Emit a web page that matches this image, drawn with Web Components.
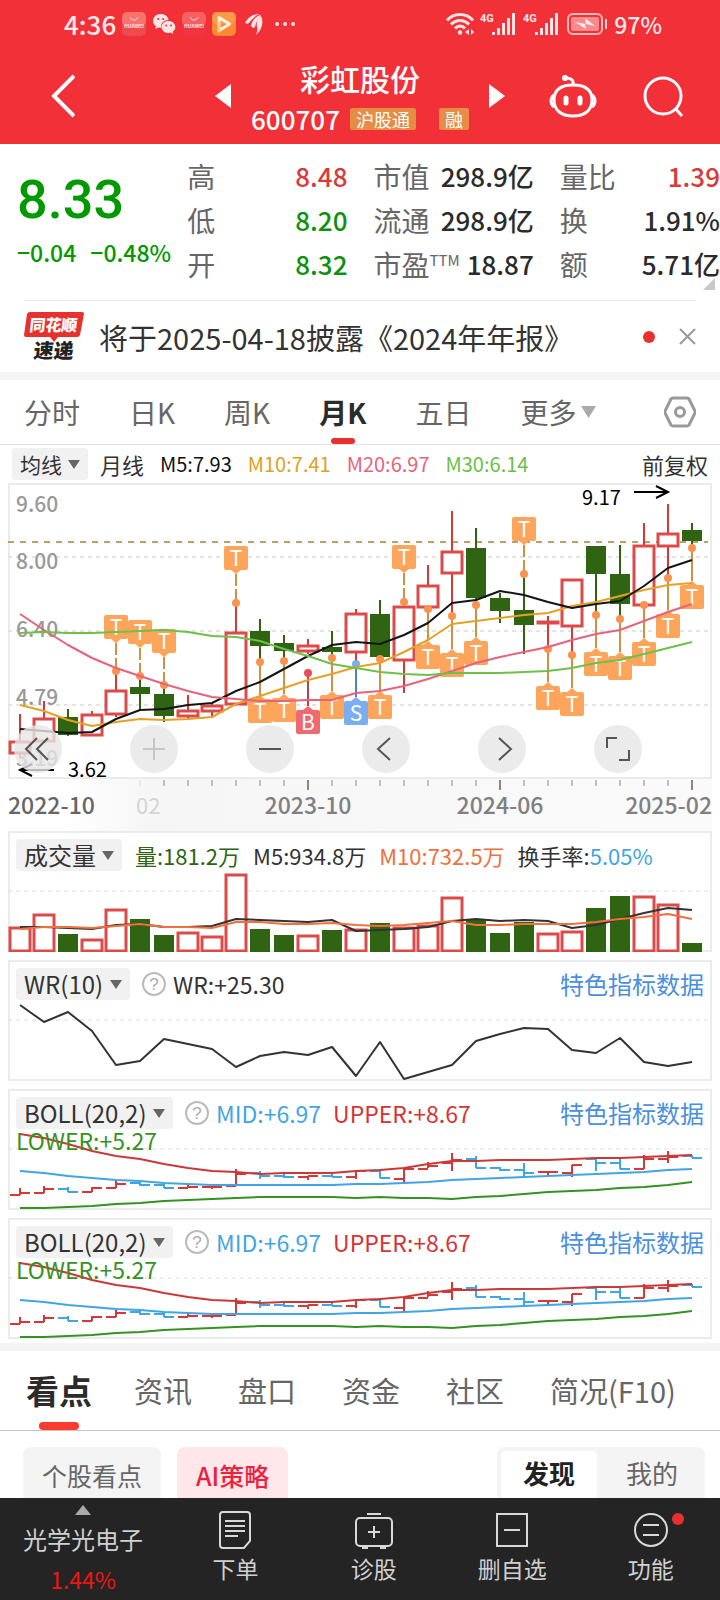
<!DOCTYPE html>
<html lang="zh-CN">
<head>
<meta charset="utf-8">
<meta name="viewport" content="width=device-width, initial-scale=1">
<title>彩虹股份 600707</title>
<style>
  body {
    margin: 0;
    background: #fff;
    color: #333;
    font-family: "Noto Sans CJK SC", "Noto Sans", sans-serif;
  }
</style>
</head>
<body>
<stock-app>
  <status-bar slot="top"></status-bar>
  <stock-header slot="top" name="彩虹股份" code="600707">
    <span>沪股通</span>
    <span>融</span>
  </stock-header>

  <stock-quote></stock-quote>
  <news-banner>将于2025-04-18披露《2024年年报》</news-banner>
  <period-tabs></period-tabs>
  <average-legend></average-legend>
  <kline-chart></kline-chart>

  <indicator-panel name="成交量" chart="volume">
    <legend-value color="#2f6412">量:181.2万</legend-value>
    <legend-value>M5:934.8万</legend-value>
    <legend-value color="#f0713c">M10:732.5万</legend-value>
    <legend-value>换手率:<span style="color:#42a5e3">5.05%</span></legend-value>
  </indicator-panel>
  <indicator-panel name="WR(10)" chart="wr" help>
    <legend-value>WR:+25.30</legend-value>
  </indicator-panel>
  <indicator-panel name="BOLL(20,2)" chart="boll" help>
    <legend-value color="#42a5e3">MID:+6.97</legend-value>
    <legend-value color="#d63333">UPPER:+8.67</legend-value>
    <legend-value slot="second" color="#359223">LOWER:+5.27</legend-value>
  </indicator-panel>
  <indicator-panel name="BOLL(20,2)" chart="boll" help>
    <legend-value color="#42a5e3">MID:+6.97</legend-value>
    <legend-value color="#d63333">UPPER:+8.67</legend-value>
    <legend-value slot="second" color="#359223">LOWER:+5.27</legend-value>
  </indicator-panel>

  <section-tabs></section-tabs>
  <view-filter></view-filter>

  <bottom-nav slot="bottom"></bottom-nav>
</stock-app>

<script>
// ---- shared chart helpers ----

const RED = "#d63838";
const GREEN = "#2f6412";

// x of the nth month inside a 704 wide chart
const monthX = (i) => 12 + i * 24;

const polyline = (values, color, width = 2) =>
  `<polyline fill="none" stroke="${color}" stroke-width="${width}" stroke-linejoin="round"
    points="${values.map((y, i) => `${monthX(i)},${y}`).join(" ")}"/>`;

const dashLine = (y, color = "#ddd", dash = "4 4", width = 1) =>
  `<line x1="0" x2="700" y1="${y}" y2="${y}" stroke="${color}" stroke-width="${width}" stroke-dasharray="${dash}"/>`;

const bar = (i, top, bottom, up) => {
  const x = monthX(i);
  return up
    ? `<rect x="${x - 10}" y="${top}" width="20" height="${Math.max(bottom - top, 1)}" fill="#fff" stroke="#dc4a4a" stroke-width="3"/>`
    : `<rect x="${x - 10}" y="${top}" width="20" height="${bottom - top}" fill="${GREEN}"/>`;
};

// ---- page shell ----

class StockApp extends HTMLElement {
  constructor() {
    super();
    this.attachShadow({ mode: "open" });
    this.shadowRoot.innerHTML = `
      <style>
        :host {
          display: flex;
          flex-direction: column;
          height: 100vh;
        }
        header, footer { flex: none; }
        main {
          flex: 1;
          min-height: 0;
          overflow: hidden;
        }
      </style>
      <header><slot name="top"></slot></header>
      <main><slot></slot></main>
      <footer><slot name="bottom"></slot></footer>
    `;
  }
}

class StatusBar extends HTMLElement {
  constructor() {
    super();
    this.attachShadow({ mode: "open" });
    this.shadowRoot.innerHTML = `
      <style>
        :host {
          display: flex;
          align-items: center;
          justify-content: space-between;
          height: 48px;
          padding: 0 58px 0 64px;
          background: #f23038;
          color: #ffe9e9;
          font-size: 26px;
          font-weight: 500;
          line-height: 32px;
        }
        div {
          display: flex;
          align-items: center;
          gap: 6px;
        }
        .percent { font-size: 23px; }
        svg { display: block; }
      </style>
      <div>
        <span>4:36</span>
        ${this.appStore("#f8736b", "#ef4b4e")}
        <svg width="24" height="24" viewBox="0 0 24 24">
          <path fill="#ffe4e4" d="M9 2C4 2 1 5.300 1 9c0 2.200 1.200 4 3 5.300L3.300 17l3-1.600c1 .3 1.900.4 2.800.4C8.600 11 12 8 16.600 8 16 4.500 13 2 9 2z"/>
          <path fill="#ffe4e4" d="M16.500 9c-4 0-7 2.700-7 6s3 6 7 6c.8 0 1.600-.1 2.300-.4L21.300 22l-.6-2.200c1.600-1.200 2.600-2.900 2.600-4.800 0-3.300-3-6-6.800-6z"/>
          <g fill="#f23038"><circle cx="6.200" cy="7" r="1.100"/><circle cx="11.200" cy="7" r="1.100"/><circle cx="14.200" cy="13.500" r="1"/><circle cx="19" cy="13.500" r="1"/></g>
        </svg>
        ${this.appStore("#f7605f", "#f03540")}
        <svg width="24" height="24" viewBox="0 0 24 24">
          <rect width="24" height="24" rx="5" fill="#fb8a33"/>
          <rect width="24" height="12" rx="5" fill="#fc9a48"/>
          <path d="M7 5.500 17.500 12 7 18.500z" fill="none" stroke="#fff3e4" stroke-width="3" stroke-linejoin="round"/>
          <path d="M7 11v8" stroke="#ffc890" stroke-width="3" stroke-linecap="round"/>
        </svg>
        <svg width="24" height="24" viewBox="0 0 24 24" fill="#ffe4e4">
          <path d="M3 11C6 5 11 2 18 2c-4 1-8 5-11 9-1 1-3 1-4 0z"/>
          <path d="M9 14c1-6 5-10 10-11-3 4-5 7-6 12-1 1-3 1-4-1z"/>
          <path d="M15 15c-1-5 1-9 4-11 3 6 1 14-5 19 1-3 2-5 1-8z"/>
        </svg>
        <svg width="24" height="6" viewBox="0 0 24 6" fill="#ffe4e4">
          <circle cx="5" cy="3" r="2"/><circle cx="13" cy="3" r="2"/><circle cx="21" cy="3" r="2"/>
        </svg>
      </div>
      <div>
        <svg width="28" height="24" viewBox="0 0 28 24" fill="none" stroke="#ffe4e4" stroke-width="3">
          <path d="M1 8.500C8 .5 20 .5 27 8.500M5 12.500c5-5.500 13-5.500 18 0M9 16.500c3-3.200 7-3.200 10 0"/>
          <circle cx="14" cy="20.500" r="2.200" fill="#ffe4e4" stroke="none"/>
          <path d="M23 17v6l-4-3zM25 23v-6l3 3z" fill="#ffe4e4" stroke="none"/>
        </svg>
        ${this.signal()}
        ${this.signal()}
        <svg width="42" height="24" viewBox="0 0 42 24">
          <rect x="2" y="2" width="34" height="20" rx="5" fill="none" stroke="#ffb9bb" stroke-width="2"/>
          <rect x="5" y="5" width="28" height="14" rx="2" fill="#fa8a8e"/>
          <path d="m9 10 11 2-1-6 10 8-10-2 1 5z" fill="#ffecec"/>
          <path d="M40 7v10" stroke="#ffd0d0" stroke-width="2"/>
        </svg>
        <span class="percent">97%</span>
      </div>
    `;
  }

  appStore(top, bottom) {
    return `
      <svg width="24" height="24" viewBox="0 0 24 24">
        <rect width="24" height="24" rx="5" fill="${bottom}"/>
        <rect width="24" height="14" rx="5" fill="${top}"/>
        <path d="M8 5c1 4 7 4 8 0" fill="none" stroke="#ffe4e4"/>
        <text x="12" y="16" text-anchor="middle" font-size="5" font-weight="700" fill="#ffe4e4">HUAWEI</text>
      </svg>`;
  }

  signal() {
    return `
      <svg width="37" height="24" viewBox="0 0 37 24" fill="#ffe4e4">
        <text x="0" y="10" font-size="11" font-weight="700" font-family="Roboto, sans-serif">4G</text>
        <path d="M12 20h3v3h-3zM17 16h3v7h-3zM22 11h3v12h-3zM27 6h3v17h-3zM32 1h3v22h-3z"/>
      </svg>`;
  }
}

class StockHeader extends HTMLElement {
  constructor() {
    super();
    this.attachShadow({ mode: "open" });
  }

  connectedCallback() {
    this.shadowRoot.innerHTML = `
      <style>
        :host {
          display: grid;
          grid-template-columns: 1fr auto 1fr;
          align-items: center;
          height: 96px;
          padding: 0 36px;
          background: #f23038;
          color: #fff;
        }
        button {
          display: block;
          padding: 0;
          border: 0;
          background: none;
          color: inherit;
          cursor: pointer;
        }
        svg { display: block; }
        .back { margin-left: 15px; }
        .switcher {
          display: flex;
          align-items: center;
          gap: 20px;
        }
        h1 {
          margin: 0 0 12px;
          font-size: 30px;
          font-weight: 500;
          line-height: 36px;
          text-align: center;
        }
        .code {
          display: flex;
          align-items: center;
          gap: 10px;
          margin-bottom: 2px;
          font-size: 26px;
          font-weight: 500;
          line-height: 22px;
        }
        .badges {
          display: flex;
          gap: 23px;
        }
        ::slotted(span) {
          padding: 0 6px;
          border-radius: 2px;
          background: #e58c46;
          font-size: 18px;
          font-weight: 400;
          line-height: 22px;
        }
        .actions {
          display: flex;
          align-items: center;
          justify-content: flex-end;
          gap: 46px;
        }
      </style>
      <button class="back" aria-label="返回">
        <svg width="24" height="44" viewBox="0 0 24 44" fill="none" stroke="#fff" stroke-width="4"><path d="M23 2 3 22l20 20"/></svg>
      </button>
      <div class="switcher">
        <button aria-label="上一只"><svg width="16" height="24" viewBox="0 0 16 24"><path d="M16 0v24L0 12z" fill="#fff"/></svg></button>
        <div>
          <h1>${this.getAttribute("name")}</h1>
          <div class="code">${this.getAttribute("code")}<div class="badges"><slot></slot></div></div>
        </div>
        <button aria-label="下一只"><svg width="16" height="24" viewBox="0 0 16 24"><path d="M0 0v24l16-12z" fill="#fff"/></svg></button>
      </div>
      <div class="actions">
        <button aria-label="智能助手">
          <svg width="48" height="44" viewBox="0 0 48 44" fill="none" stroke="#fff" stroke-width="3">
            <path d="M24 11c12 0 19 5 19 15s-7 16-19 16S5 36 5 26s7-15 19-15z"/>
            <path d="M5 21c-4 3-4 9 0 12M43 21c4 3 4 9 0 12M24 11c1-5-2-7-7-7"/>
            <circle cx="16" cy="4" r="3" fill="#fff" stroke="none"/>
            <path d="M17 24v5M31 24v5" stroke-width="5" stroke-linecap="round"/>
          </svg>
        </button>
        <button aria-label="搜索">
          <svg width="41" height="41" viewBox="0 0 41 41" fill="none" stroke="#fff" stroke-width="3">
            <circle cx="20" cy="20" r="18"/><path d="m32 32 7 8"/>
          </svg>
        </button>
      </div>
    `;
  }
}

class StockQuote extends HTMLElement {
  constructor() {
    super();
    this.attachShadow({ mode: "open" });
    this.stats = [
      ["高", "8.48", "up"], ["市值", "298.9亿"], ["量比", "1.39", "up"],
      ["低", "8.20", "down"], ["流通", "298.9亿"], ["换", "1.91%"],
      ["开", "8.32", "down"], ["市盈<sup>TTM</sup>", "18.87"], ["额", "5.71亿"],
    ];
    this.shadowRoot.innerHTML = `
      <style>
        :host {
          position: relative;
          display: flex;
          gap: 16px;
          padding: 10px 0 14px 17px;
        }
        .price { color: #009900; }
        .last {
          margin-top: 10px;
          font-family: Roboto, sans-serif;
          font-size: 54px;
          font-weight: 500;
          line-height: 72px;
        }
        .change {
          display: flex;
          gap: 14px;
          font-size: 23px;
          font-weight: 500;
          line-height: 32px;
        }
        dl {
          flex: 1;
          display: grid;
          grid-template-columns: repeat(3, 1fr);
          column-gap: 26px;
          margin: 0;
        }
        dl div {
          display: flex;
          justify-content: space-between;
          line-height: 44px;
          white-space: nowrap;
        }
        dt {
          color: #666;
          font-size: 28px;
        }
        dd {
          margin: 0;
          color: #2b2b2b;
          font-size: 26px;
          font-weight: 500;
        }
        sup {
          font-size: 15px;
          line-height: 0;
          vertical-align: 10px;
        }
        .up { color: #d83b3b; }
        .down { color: #0f900f; }
        .more {
          position: absolute;
          right: 5px;
          bottom: 10px;
          border-bottom: 12px solid #c8c8c8;
          border-left: 12px solid transparent;
        }
      </style>
      <div class="price">
        <div class="last">8.33</div>
        <div class="change"><span>−0.04</span><span>−0.48%</span></div>
      </div>
      <dl>${this.stats.map(([label, value, tone = ""]) => `
        <div><dt>${label}</dt><dd class="${tone}">${value}</dd></div>`).join("")}
      </dl>
      <span class="more"></span>
    `;
  }
}

class NewsBanner extends HTMLElement {
  constructor() {
    super();
    this.attachShadow({ mode: "open" });
    this.shadowRoot.innerHTML = `
      <style>
        :host {
          display: block;
          padding: 0 24px;
          border-bottom: 8px solid #f4f4f4;
        }
        .row {
          display: flex;
          align-items: center;
          height: 71px;
          border-top: 1px solid #e8e8e8;
        }
        a {
          flex: 1;
          margin-left: 15px;
          color: #333;
          font-size: 29px;
          line-height: 40px;
          text-decoration: none;
          white-space: nowrap;
        }
        .dot {
          width: 12px;
          height: 12px;
          margin-right: 24px;
          border-radius: 50%;
          background: #e8302e;
        }
        button {
          padding: 0;
          border: 0;
          background: none;
        }
        svg {
          display: block;
          overflow: visible;
        }
      </style>
      <div class="row">
        <svg width="60" height="52" viewBox="0 0 60 52">
          <path d="M6 1h52q2 0 2 2l-4 21q-1 2-3 2H34l-4 5-4-5H2q-2 0-2-2L3 3q1-2 3-2z" fill="#e6322f"/>
          <g transform="skewX(-6)" font-weight="900" text-anchor="middle">
            <text x="31" y="20" font-size="16" fill="#fff">同花顺</text>
            <text x="34" y="47" font-size="20" fill="#222">速递</text>
          </g>
        </svg>
        <a href="#news"><slot></slot></a>
        <span class="dot"></span>
        <button aria-label="关闭">
          <svg width="17" height="17" viewBox="0 0 17 17" stroke="#999" stroke-width="2"><path d="m1 1 15 15M16 1 1 16"/></svg>
        </button>
      </div>
    `;
  }
}

class PeriodTabs extends HTMLElement {
  constructor() {
    super();
    this.attachShadow({ mode: "open" });
    const tabs = ["分时", "日K", "周K", "月K", "五日"];
    this.shadowRoot.innerHTML = `
      <style>
        :host {
          display: flex;
          align-items: center;
          gap: 49px;
          height: 64px;
          padding: 0 24px;
          border-bottom: 1px solid #e2e2e2;
        }
        button {
          position: relative;
          display: flex;
          align-items: center;
          gap: 5px;
          padding: 0;
          border: 0;
          background: none;
          color: #666;
          font: inherit;
          font-size: 28px;
          line-height: 64px;
          white-space: nowrap;
          cursor: pointer;
        }
        .active {
          color: #2b2b2b;
          font-weight: 700;
        }
        .active::after {
          content: "";
          position: absolute;
          bottom: 0;
          left: calc(50% - 12px);
          width: 24px;
          height: 6px;
          border-radius: 3px;
          background: #e8302e;
        }
        .settings { margin-left: auto; }
      </style>
      ${tabs.map((tab) => `<button class="${tab === "月K" ? "active" : ""}">${tab}</button>`).join("")}
      <button>更多<svg width="15" height="12" viewBox="0 0 15 12"><path d="M0 0h15L7.500 12z" fill="#aaa"/></svg></button>
      <button class="settings" aria-label="设置">
        <svg width="32" height="32" viewBox="0 0 32 32" fill="none" stroke="#999" stroke-width="3">
          <path d="M9 2h14q1 0 2 1l6 12v2l-6 12q-1 1-2 1H9q-1 0-2-1L1 17v-2L7 3q1-1 2-1z"/>
          <circle cx="16" cy="16" r="4.500"/>
        </svg>
      </button>
    `;
  }
}

// Grey drop-down with a caret, used by every chart legend
class IndicatorSelect extends HTMLElement {
  constructor() {
    super();
    this.attachShadow({ mode: "open" });
  }

  connectedCallback() {
    const name = this.getAttribute("name");
    this.shadowRoot.innerHTML = `
      <style>
        :host { display: block; flex: none; }
        label {
          display: flex;
          align-items: center;
          gap: 6px;
          height: 32px;
          padding: 0 8px;
          border-radius: 4px;
          background: #f1f1f1;
        }
        select {
          appearance: none;
          padding: 0;
          border: 0;
          background: none;
          color: #333;
          font: inherit;
          font-size: var(--select-size, 24px);
          line-height: 32px;
        }
      </style>
      <label>
        <select aria-label="指标"><option>${name}</option></select>
        <svg width="12" height="9" viewBox="0 0 12 9"><path d="M0 0h12L6 9z" fill="#666"/></svg>
      </label>
    `;
  }
}

class AverageLegend extends HTMLElement {
  constructor() {
    super();
    this.attachShadow({ mode: "open" });
    this.shadowRoot.innerHTML = `
      <style>
        :host {
          display: flex;
          align-items: center;
          gap: 16px;
          height: 38px;
          padding: 0 12px;
          font-size: 20px;
          line-height: 32px;
          white-space: nowrap;
        }
        indicator-select {
          --select-size: 21px;
          margin-right: -4px;
        }
        .text { font-size: 22px; }
        .adjust {
          margin-left: auto;
          font-size: 22px;
        }
      </style>
      <indicator-select name="均线"></indicator-select>
      <span class="text">月线</span>
      <span style="color:#111">M5:7.93</span>
      <span style="color:#e0a020">M10:7.41</span>
      <span style="color:#e8637a">M20:6.97</span>
      <span style="color:#6cbf48">M30:6.14</span>
      <span class="adjust">前复权</span>
    `;
  }
}

class KlineChart extends HTMLElement {
  constructor() {
    super();
    this.attachShadow({ mode: "open" });

    // [body top, body bottom, high, low, up]
    this.candles = [
      [259, 270, 231, 275, 1], [236, 258, 218, 258, 1], [234, 252, 226, 253, 0], [232, 252, 228, 252, 1],
      [208, 231, 190, 234, 1], [204, 211, 194, 227, 0], [211, 233, 203, 239, 0], [228, 233, 212, 235, 1],
      [223, 228, 220, 235, 1], [150, 221, 120, 222, 1], [148, 163, 136, 178, 0], [160, 168, 152, 178, 0],
      [163, 168, 156, 171, 1], [164, 169, 148, 175, 0], [131, 169, 126, 181, 1], [131, 174, 117, 176, 0],
      [124, 177, 119, 210, 1], [103, 124, 82, 126, 1], [69, 90, 28, 133, 1], [65, 115, 45, 122, 0],
      [115, 128, 110, 140, 0], [127, 142, 90, 171, 0], [139, 140, 133, 165, 1], [97, 143, 97, 172, 1],
      [63, 91, 63, 132, 0], [91, 121, 62, 135, 0], [63, 122, 40, 122, 1], [51, 63, 21, 95, 1],
      [47, 58, 40, 65, 0],
    ];

    // [month, box top, dot y, letter]
    this.markers = [
      [4, 132, 188, "T"], [5, 137, 193, "T"], [6, 146, 202, "T"], [9, 63, 120, "T"],
      [16, 62, 119, "T"], [21, 34, 91, "T"], [10, 216, 179, "T"], [11, 215, 178, "T"],
      [12, 227, 190, "B"], [13, 212, 175, "T"], [14, 218, 181, "S"], [15, 212, 176, "T"],
      [17, 162, 126, "T"], [18, 170, 133, "T"], [19, 158, 122, "T"], [22, 203, 166, "T"],
      [23, 209, 172, "T"], [24, 169, 132, "T"], [25, 173, 136, "T"], [26, 159, 122, "T"],
      [27, 131, 95, "T"], [28, 102, 65, "T"],
    ];

    this.averages = [
      ["#e3a224", [222, 228, 237, 243, 239, 236, 237, 236, 234, 221, 213, 205, 197, 191, 184, 180, 169, 157, 141, 138, 135, 132, 130, 123, 119, 113, 107, 102, 100]],
      ["#151515", [246, 248, 250, 249, 236, 227, 226, 222, 220, 208, 199, 186, 173, 162, 159, 161, 152, 140, 120, 117, 108, 112, 119, 125, 121, 118, 103, 85, 77]],
      ["#e8637a", [131, 147, 162, 175, 185, 193, 201, 208, 214, 216, 218, 218, 217, 217, 210, 208, 203, 196, 188, 180, 174, 169, 164, 157, 151, 147, 138, 129, 121]],
      ["#6fbf4b", [150, 149, 150, 150, 149, 148, 147, 149, 153, 154, 158, 166, 173, 181, 185, 189, 191, 192, 190, 190, 190, 189, 188, 185, 180, 177, 171, 165, 159]],
    ];

    this.tools = [
      ["最早", "M23 13 12 24l11 11M34 13 23 24l11 11"],
      ["放大", "M13 24h22M24 13v22"],
      ["缩小", "M13 24h22"],
      ["向左", "M28 13 16 24l12 11"],
      ["向右", "M21 13l12 11-12 11"],
      ["全屏", "M13 23V13h10M35 25v10H25"],
    ];

    this.render();
  }

  candle([top, bottom, high, low, up], i) {
    const x = monthX(i);
    return `<line x1="${x}" x2="${x}" y1="${high}" y2="${low}" stroke="${up ? RED : GREEN}" stroke-width="2"/>`
      + bar(i, top, bottom, up);
  }

  marker([i, top, dot, letter]) {
    const x = monthX(i);
    const above = top < dot;
    const [fill, stem] = {
      T: ["#fea55c", "#cf9145"],
      B: ["#ef6a6e", "#b5454a"],
      S: ["#7aaef0", "#4d83b5"],
    }[letter];
    const edge = above ? top + 24 : top;
    const tip = above ? edge + 4 : edge - 4;
    return `
      <line x1="${x}" x2="${x}" y1="${tip}" y2="${dot}" stroke="${stem}" stroke-width="2" ${above ? 'stroke-dasharray="12 3"' : ""}/>
      <circle cx="${x}" cy="${dot}" r="4" fill="${letter === "B" ? "#ea4d55" : letter === "S" ? fill : "#fb9350"}"/>
      <rect x="${x - 12}" y="${top}" width="24" height="24" rx="2" fill="${fill}"/>
      <path d="M${x - 5} ${edge}h10L${x} ${tip}z" fill="${fill}"/>
      <text x="${x}" y="${top + 20}" font-size="21" text-anchor="middle" fill="#fff">${letter}</text>`;
  }

  axis() {
    const ticks = this.candles.map((c, i) => {
      const major = [12, 20, 28].includes(i);
      return i < 5 ? "" : `<path d="M${monthX(i)} 1v${major ? 10 : 6}" stroke="${i === 5 ? "#ddd" : "#888"}" stroke-width="${major ? 2 : 1}"/>`;
    }).join("");
    return `
      <svg class="axis" viewBox="0 0 704 52" font-size="23" font-weight="500" fill="#808080">
        ${ticks}
        <text x="0" y="35" fill="#666">2022-10</text>
        <text x="128" y="35" font-size="22" fill="#d4d4d4" font-weight="400">02</text>
        <text x="300" y="35" text-anchor="middle">2023-10</text>
        <text x="492" y="35" text-anchor="middle">2024-06</text>
        <text x="704" y="35" text-anchor="end">2025-02</text>
      </svg>`;
  }

  render() {
    const prices = [["9.60", 29], ["8.00", 86], ["6.40", 154], ["4.79", 222], ["3.19", 283]];
    this.shadowRoot.innerHTML = `
      <style>
        :host {
          display: block;
          margin: 0 8px;
        }
        .plot {
          position: relative;
          box-shadow: inset 0 0 0 2px #ebebeb;
        }
        svg {
          display: block;
          width: 100%;
          overflow: visible;
        }
        .axis { background: linear-gradient(90deg, #fff 8%, #f6f6f6 20%, #fafafa); }
        .tools {
          position: absolute;
          left: 6px;
          right: 70px;
          bottom: 6px;
          display: flex;
          justify-content: space-between;
        }
        button {
          width: 48px;
          height: 48px;
          padding: 0;
          border: 0;
          border-radius: 50%;
          background: rgba(230, 230, 230, 0.8);
          cursor: pointer;
        }
      </style>
      <div class="plot">
        <svg viewBox="0 0 704 296">
          ${[74, 148, 222].map((y) => dashLine(y, "#e4e4e4", "4 4", 2)).join("")}
          ${dashLine(59, "#baa06c", "6 6", 2)}
          <g font-size="21" font-weight="500" fill="#999">
            ${prices.map(([text, y]) => `<text x="8" y="${y}">${text}</text>`).join("")}
          </g>
          ${this.candles.map((c, i) => this.candle(c, i)).join("")}
          ${this.markers.map((m) => this.marker(m)).join("")}
          ${this.averages.map(([color, values]) => polyline(values, color)).join("")}
          <g font-size="20" fill="#000">
            <text x="574" y="22">9.17</text>
            <text x="60" y="294">3.62</text>
          </g>
          <path d="M626 9h34m-12-6 12 6-12 6M46 287H12m12-6-12 6 12 6" fill="none" stroke="#000" stroke-width="2"/>
        </svg>
        <div class="tools">
          ${this.tools.map(([label, d]) => `
            <button aria-label="${label}">
              <svg viewBox="0 0 48 48" fill="none" stroke="${label === "放大" ? "#c6c6c6" : "#555"}" stroke-width="2"><path d="${d}"/></svg>
            </button>`).join("")}
        </div>
      </div>
      ${this.axis()}
    `;
  }
}

class LegendValue extends HTMLElement {
  constructor() {
    super();
    this.attachShadow({ mode: "open" });
  }

  connectedCallback() {
    this.shadowRoot.innerHTML = `
      <style>
        :host {
          display: block;
          color: ${this.getAttribute("color") || "#333"};
          white-space: nowrap;
        }
      </style>
      <slot></slot>
    `;
  }
}

class IndicatorPanel extends HTMLElement {
  constructor() {
    super();
    this.attachShadow({ mode: "open" });
  }

  connectedCallback() {
    const help = this.hasAttribute("help");
    this.shadowRoot.innerHTML = `
      <style>
        :host {
          display: grid;
          margin: 0 8px 8px;
          box-shadow: inset 0 0 0 2px #ebebeb;
          font-size: ${help ? 23 : 22}px;
          line-height: 32px;
        }
        .chart, .legend { grid-area: 1 / 1; }
        .chart {
          display: block;
          width: 100%;
        }
        .legend { padding: 8px 8px 0; }
        .row {
          display: flex;
          align-items: center;
          gap: ${help ? 12 : 13}px;
        }
        .second {
          height: 22px;
          line-height: 22px;
        }
        .help {
          display: flex;
          margin-right: -5px;
          padding: 0;
          border: 0;
          background: none;
        }
        a {
          margin-left: auto;
          color: #4a8fe0;
          font-size: 24px;
          text-decoration: none;
          white-space: nowrap;
        }
      </style>
      <svg class="chart" viewBox="0 -1 704 121">${this[this.getAttribute("chart")]()}</svg>
      <div class="legend">
        <div class="row">
          <indicator-select name="${this.getAttribute("name")}"></indicator-select>
          ${help ? `
            <button class="help" aria-label="说明">
              <svg width="24" height="24" viewBox="0 0 24 24">
                <circle cx="12" cy="12" r="11" fill="none" stroke="#bbb" stroke-width="2"/>
                <text x="12" y="18" font-size="17" text-anchor="middle" fill="#aaa">?</text>
              </svg>
            </button>` : ""}
          <slot></slot>
          ${help ? '<a href="#data">特色指标数据</a>' : ""}
        </div>
        <div class="second"><slot name="second"></slot></div>
      </div>
    `;
  }

  volume() {
    const tops = [96, 83, 102, 108, 78, 87, 103, 101, 105, 43, 97, 103, 104, 98, 98, 91, 96, 94, 66, 87, 101, 90, 102, 100, 76, 64, 65, 73, 111];
    const falling = [2, 5, 6, 10, 11, 13, 15, 19, 20, 21, 24, 25, 28];
    return dashLine(59)
      + tops.map((y, i) => bar(i, y, falling.includes(i) ? 120 : 119, !falling.includes(i))).join("")
      + polyline([95, 95, 96, 97, 93, 92, 95, 95, 94, 87, 88, 89, 90, 88, 99, 98, 97, 95, 89, 87, 89, 88, 89, 96, 93, 87, 81, 76, 78], "#333")
      + polyline([97, 95, 95, 96, 94, 92, 95, 95, 96, 90, 90, 92, 92, 91, 93, 94, 93, 91, 89, 93, 93, 92, 92, 92, 90, 87, 85, 82, 87], "#f0713c");
  }

  wr() {
    return dashLine(59)
      + polyline([44, 61, 51, 70, 104, 100, 78, 83, 88, 106, 95, 91, 94, 86, 115, 81, 118, 111, 104, 80, 73, 67, 68, 89, 92, 77, 101, 105, 101], "#333");
  }

  boll() {
    // [open, high, low, close, up]
    const ticks = [
      [105, 98, 105, 103, 1], [103, 96, 103, 99, 1], [99, 97, 102, 102, 0], [102, 97, 102, 98, 1],
      [98, 91, 98, 94, 1], [93, 91, 96, 95, 0], [95, 94, 98, 98, 0], [98, 95, 98, 97, 1],
      [97, 96, 99, 97, 1], [96, 79, 96, 84, 1], [83, 81, 89, 86, 0], [86, 84, 88, 87, 0],
      [87, 86, 90, 86, 1], [86, 84, 87, 87, 0], [87, 81, 89, 81, 1], [81, 79, 88, 88, 0],
      [89, 78, 93, 79, 1], [79, 72, 78, 76, 1], [73, 63, 81, 70, 1], [69, 66, 78, 78, 0],
      [78, 77, 81, 80, 0], [80, 73, 87, 83, 0], [82, 82, 87, 82, 1], [83, 75, 87, 75, 1],
      [69, 68, 81, 73, 0], [73, 69, 79, 79, 0], [79, 65, 79, 69, 1], [69, 61, 73, 67, 1],
      [66, 65, 68, 68, 0],
    ];
    return dashLine(59)
      + ticks.map(([open, high, low, close, up], i) => {
        const x = monthX(i);
        return `<path d="M${x - 10} ${open}H${x}M${x} ${high}V${low}M${x} ${close}h10" stroke="${up ? RED : "#42a5e3"}" stroke-width="2"/>`;
      }).join("")
      + polyline([44, 48, 54, 61, 66, 69, 74, 78, 81, 82, 84, 83, 83, 83, 81, 80, 78, 74, 71, 71, 70, 70, 70, 69, 68, 68, 67, 66, 65], "#cc3838")
      + polyline([81, 83, 86, 88, 90, 91, 93, 94, 95, 95, 95, 95, 95, 95, 94, 94, 93, 92, 90, 89, 88, 87, 86, 85, 84, 83, 82, 80, 79], "#42a5e3")
      + polyline([118, 118, 117, 116, 114, 113, 111, 110, 109, 108, 107, 107, 107, 107, 108, 107, 108, 108, 109, 107, 106, 104, 102, 101, 100, 98, 97, 95, 92], "#359223");
  }
}

class SectionTabs extends HTMLElement {
  constructor() {
    super();
    this.attachShadow({ mode: "open" });
    this.shadowRoot.innerHTML = `
      <style>
        :host {
          display: flex;
          align-items: center;
          gap: 46px;
          height: 79px;
          margin-top: -4px;
          padding: 0 26px;
          border-top: 8px solid #f4f4f4;
          border-bottom: 1px solid #c4c4c4;
        }
        button {
          position: relative;
          padding: 0;
          border: 0;
          background: none;
          color: #666;
          font: inherit;
          font-size: 29px;
          line-height: 79px;
          white-space: nowrap;
          cursor: pointer;
        }
        .active {
          margin-right: -4px;
          color: #2b2b2b;
          font-size: 33px;
          font-weight: 700;
        }
        .active::after {
          content: "";
          position: absolute;
          bottom: 0;
          left: calc(50% - 20px);
          width: 40px;
          height: 8px;
          border-radius: 4px;
          background: #fb3a30;
        }
      </style>
      <button class="active">看点</button>
      <button>资讯</button>
      <button>盘口</button>
      <button>资金</button>
      <button>社区</button>
      <button>简况(F10)</button>
    `;
  }
}

class ViewFilter extends HTMLElement {
  constructor() {
    super();
    this.attachShadow({ mode: "open" });
    this.shadowRoot.innerHTML = `
      <style>
        :host {
          display: flex;
          gap: 16px;
          padding: 16px 15px 0 23px;
        }
        button {
          padding: 0 19px;
          border: 0;
          border-radius: 8px;
          background: #f4f4f4;
          color: #666;
          font: inherit;
          font-size: 25px;
          line-height: 56px;
          white-space: nowrap;
        }
        .ai {
          background: #ffe7ea;
          color: #f0203c;
          font-weight: 500;
        }
        .segment {
          display: flex;
          margin-left: auto;
          padding: 4px;
          border-radius: 8px;
          background: #f4f4f4;
        }
        .segment button {
          padding: 0 23px 4px 29px;
          font-size: 26px;
          line-height: 42px;
        }
        .segment .active {
          padding: 0 22px 4px;
          border-radius: 4px;
          background: #fff;
          color: #222;
          font-weight: 700;
        }
      </style>
      <button>个股看点</button>
      <button class="ai">AI策略</button>
      <div class="segment">
        <button class="active">发现</button>
        <button>我的</button>
      </div>
    `;
  }
}

class BottomNav extends HTMLElement {
  constructor() {
    super();
    this.attachShadow({ mode: "open" });
    this.shadowRoot.innerHTML = `
      <style>
        :host {
          display: flex;
          height: 102px;
          background: #242424;
          color: #d0d0d0;
          font-size: 23px;
          line-height: 32px;
        }
        a {
          flex: 1 1 0;
          display: flex;
          flex-direction: column;
          align-items: center;
          gap: 3px;
          padding-top: 13px;
          color: inherit;
          text-decoration: none;
          white-space: nowrap;
        }
        .sector {
          flex-grow: 1.2;
          gap: 8px;
          padding-top: 7px;
          font-size: 24px;
        }
        .sector b {
          color: #f01414;
          font-size: 23px;
          font-weight: 400;
        }
        .icon {
          position: relative;
          display: block;
        }
        .icon svg { display: block; }
        .dot::after {
          content: "";
          position: absolute;
          top: 2px;
          right: -16px;
          width: 12px;
          height: 12px;
          border-radius: 50%;
          background: #e8302e;
        }
      </style>
      <a class="sector" href="#sector">
        <svg width="16" height="10" viewBox="0 0 16 10"><path d="M0 10h16L8 0z" fill="#aaa"/></svg>
        <span>光学光电子</span>
        <b>1.44%</b>
      </a>
      ${this.item("下单", '<path d="M5 1h24q3 0 3 3v26l-6 7H5q-3 0-3-3V4q0-3 3-3z"/><path d="M7 10h20M7 15h20M7 20h20M7 25h13"/>', 34)}
      ${this.item("诊股", '<rect x="1" y="7" width="36" height="28" rx="4"/><path d="M12 3h14M13 21h12M19 15v12"/><path d="M7 37h6M25 37h6"/>', 38)}
      ${this.item("删自选", '<rect x="2" y="3" width="30" height="32"/><path d="M9 19h16"/>', 34)}
      ${this.item("功能", '<circle cx="17" cy="19" r="16"/><path d="M9 14h16M9 24h16"/>', 34, "dot")}
    `;
  }

  item(label, icon, width, badge = "") {
    return `
      <a href="#${label}">
        <span class="icon ${badge}"><svg width="${width}" height="38" viewBox="0 0 ${width} 38" fill="none" stroke="#d8d8d8" stroke-width="2">${icon}</svg></span>
        <span>${label}</span>
      </a>`;
  }
}

customElements.define("stock-app", StockApp);
customElements.define("status-bar", StatusBar);
customElements.define("stock-header", StockHeader);
customElements.define("stock-quote", StockQuote);
customElements.define("news-banner", NewsBanner);
customElements.define("period-tabs", PeriodTabs);
customElements.define("indicator-select", IndicatorSelect);
customElements.define("average-legend", AverageLegend);
customElements.define("kline-chart", KlineChart);
customElements.define("legend-value", LegendValue);
customElements.define("indicator-panel", IndicatorPanel);
customElements.define("section-tabs", SectionTabs);
customElements.define("view-filter", ViewFilter);
customElements.define("bottom-nav", BottomNav);
</script>
</body>
</html>
